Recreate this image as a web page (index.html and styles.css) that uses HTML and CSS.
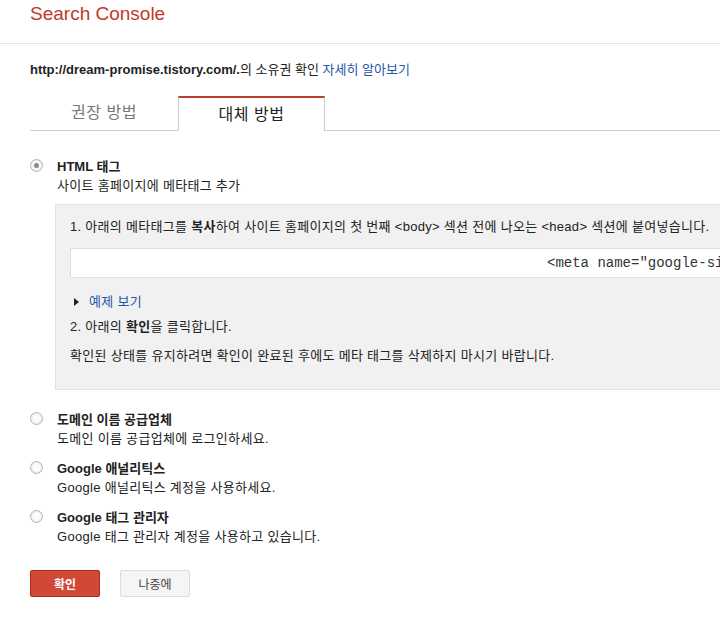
FILE: index.html
```html
<!DOCTYPE html>
<html lang="ko">
<head>
    <meta charset="UTF-8">
    <meta name="viewport" content="width=device-width, initial-scale=1.0">
    <title>Search Console</title>
    <link rel="stylesheet" href="styles.css">
</head>
<body>
    <div class="header">
        <span class="logo">Search Console</span>
    </div>

    <div class="main">
        <div class="site-line">
            <b>http://dream-promise.tistory.com/.</b>의 소유권 확인 <a href="#">자세히 알아보기</a>
        </div>

        <div class="tabs">
            <div class="tab">권장 방법</div>
            <div class="tab active">대체 방법</div>
            <div class="tab-rest"></div>
        </div>

        <div class="option">
            <span class="radio checked"></span>
            <div class="option-text">
                <div class="option-title">HTML 태그</div>
                <div class="ko">사이트 홈페이지에 메타태그 추가</div>
            </div>
        </div>

        <div class="method-box">
            <p class="step ko">1. 아래의 메타태그를 <b>복사</b>하여 사이트 홈페이지의 첫 번째 &lt;body&gt; 섹션 전에 나오는 &lt;head&gt; 섹션에 붙여넣습니다.</p>
            <div class="code-field">&lt;meta name="google-site-verification" content="" /&gt;</div>
            <div class="example"><span class="arrow"></span><a href="#" class="ko">예제 보기</a></div>
            <p class="step ko">2. 아래의 <b>확인</b>을 클릭합니다.</p>
            <p class="note ko">확인된 상태를 유지하려면 확인이 완료된 후에도 메타 태그를 삭제하지 마시기 바랍니다.</p>
        </div>

        <div class="option spaced">
            <span class="radio"></span>
            <div class="option-text">
                <div class="option-title">도메인 이름 공급업체</div>
                <div class="ko">도메인 이름 공급업체에 로그인하세요.</div>
            </div>
        </div>
        <div class="option">
            <span class="radio"></span>
            <div class="option-text">
                <div class="option-title">Google 애널리틱스</div>
                <div class="ko">Google 애널리틱스 계정을 사용하세요.</div>
            </div>
        </div>
        <div class="option">
            <span class="radio"></span>
            <div class="option-text">
                <div class="option-title">Google 태그 관리자</div>
                <div class="ko">Google 태그 관리자 계정을 사용하고 있습니다.</div>
            </div>
        </div>

        <div class="buttons">
            <button class="btn btn-red">확인</button>
            <button class="btn btn-gray">나중에</button>
        </div>
    </div>
</body>
</html>
```

FILE: styles.css
```css
body {
    margin: 0;
    font-family: "Liberation Sans", Arial, "Noto Sans CJK KR", sans-serif;
    font-size: 13px;
    line-height: 19px;
    color: #222;
    background: white;
    overflow: hidden;
}
a {
    color: #1f58a6;
    text-decoration: none;
}
.ko {
    letter-spacing: 0.3px;
}
.header {
    height: 43px;
    border-bottom: 1px solid #e5e5e5;
    padding-left: 30px;
}
.logo {
    display: inline-block;
    padding-top: 2px;
    font-size: 19px;
    line-height: 24px;
    color: #c0392b;
}
.main {
    padding: 0 0 0 30px;
    width: 1000px;
}
.site-line {
    margin-top: 16px;
}
.site-line b {
    font-weight: bold;
}
.tabs {
    display: flex;
    margin-top: 17px;
    height: 35px;
}
.tab {
    width: 148px;
    text-align: center;
    font-size: 16px;
    line-height: 33px;
    color: #777;
    border-bottom: 1px solid #ccc;
    box-sizing: border-box;
    letter-spacing: 0.5px;
}
.tab.active {
    width: 147px;
    color: #222;
    border: 1px solid #ccc;
    border-top: 2px solid #b7402f;
    border-bottom: none;
}
.tab-rest {
    flex: 1;
    border-bottom: 1px solid #ccc;
}
.option {
    display: flex;
    margin-top: 11px;
}
.tabs + .option {
    margin-top: 26px;
}
.option.spaced {
    margin-top: 20px;
}
.radio {
    width: 11px;
    height: 11px;
    margin: 2px 14px 0 0;
    border: 1px solid #b5b5b5;
    border-radius: 50%;
    background: radial-gradient(circle, #fdfdfd 30%, #e4e4e4 100%);
    box-sizing: content-box;
    position: relative;
    flex-shrink: 0;
}
.radio.checked::after {
    content: "";
    position: absolute;
    left: 3px;
    top: 3px;
    width: 5px;
    height: 5px;
    border-radius: 50%;
    background: #8a8a8a;
}
.option-title {
    font-weight: bold;
}
.method-box {
    margin: 9px 0 0 25px;
    padding: 12px 14px 24px;
    background: #f1f1f1;
    border: 1px solid #e3e3e3;
    border-right: none;
    width: 900px;
}
.step, .note {
    margin: 0;
}
.code-field {
    margin-top: 12px;
    height: 30px;
    background: white;
    border: 1px solid #e0e0e0;
    box-sizing: border-box;
    font-family: "Liberation Mono", "Courier New", monospace;
    font-size: 14px;
    line-height: 28px;
    color: #333;
    text-indent: 476px;
    white-space: nowrap;
    overflow: hidden;
}
.example {
    margin-top: 14px;
    display: flex;
    align-items: center;
}
.arrow {
    width: 0;
    height: 0;
    margin: 0 10px 0 4px;
    border-top: 4px solid transparent;
    border-bottom: 4px solid transparent;
    border-left: 5px solid #222;
}
.example + .step {
    margin-top: 6px;
}
.note {
    margin-top: 10px;
}
.buttons {
    display: flex;
    gap: 20px;
    margin-top: 24px;
}
.btn {
    height: 27px;
    font-family: inherit;
    font-size: 12px;
    border-radius: 2px;
    padding: 0;
    cursor: pointer;
}
.btn-red {
    width: 70px;
    background: #d14836;
    border: 1px solid #b0281a;
    color: white;
    font-weight: bold;
}
.btn-gray {
    width: 70px;
    background: #f5f5f5;
    border: 1px solid #dcdcdc;
    color: #444;
}
```
